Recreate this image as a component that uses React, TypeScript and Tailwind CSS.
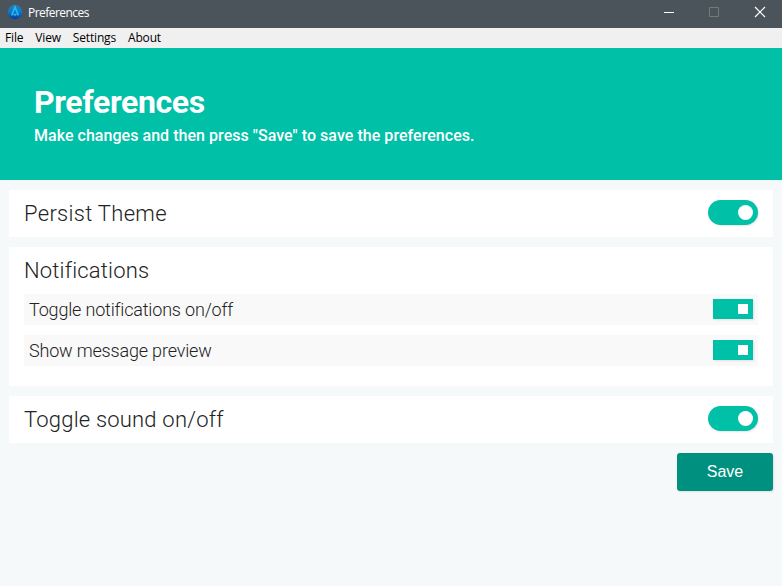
import React from 'react';

function Toggle() {
  return (
    <span className="mb-0.5 flex h-[25px] w-[50px] items-center justify-end rounded-full bg-[#00c0a7] pr-[5px] shadow-[1px_1px_2px_rgba(0,0,0,0.1)]">
      <span className="size-[15px] rounded-full bg-white" />
    </span>
  );
}

function SquareToggle() {
  return (
    <span className="mb-px flex h-5 w-10 items-center justify-end bg-[#00c0a7] pr-[5px] shadow-[1px_1px_2px_rgba(0,0,0,0.1)]">
      <span className="size-[10px] bg-white" />
    </span>
  );
}

function Row({ label }: { label: string }) {
  return (
    <div className="flex h-[31px] items-center justify-between bg-[#f9f9f9] px-[5px]">
      <span className="text-[18px] font-light leading-[31px] tracking-[-0.18px]">{label}</span>
      <SquareToggle />
    </div>
  );
}

export default function App() {
  return (
    <div className="flex h-[586px] w-[782px] flex-col overflow-hidden bg-[#f5f9fa] font-[Roboto,sans-serif] text-[#222]">
      <div className="flex h-7 shrink-0 items-center bg-[#4b545a] font-['Open_Sans',sans-serif] text-white">
        <svg className="mb-1 ml-[7px] size-4" viewBox="0 0 16 16" fill="none">
          <defs>
            <linearGradient id="appIcon" x1="8" y1="1" x2="8" y2="15" gradientUnits="userSpaceOnUse">
              <stop stopColor="#287fac" />
              <stop offset="0.5" stopColor="#087bd0" />
              <stop offset="1" stopColor="#003c9e" />
            </linearGradient>
          </defs>
          <circle cx="8" cy="8" r="7.2" fill="url(#appIcon)" />
          <path d="M4.600 11.500 8 3l3.400 8.500M6.500 10 8 11l1.500-1" stroke="#30b9ed" strokeWidth="1.5" />
        </svg>
        <span className="mb-0.5 ml-[5px] text-[12px] tracking-[-0.55px]">Preferences</span>
        <svg className="ml-auto h-7 w-[136px]" viewBox="0 0 136 28" fill="none">
          <path d="M18 12.500h10" stroke="#fff" />
          <path d="M63.500 7.500h9v9h-9z" stroke="#737a7b" />
          <path d="m109 7 10 10m0-10-10 10" stroke="#fff" strokeWidth="1.2" />
        </svg>
      </div>
      <nav className="flex h-5 shrink-0 items-center gap-3 bg-[#f0f0f0] pl-[5px] font-['Open_Sans',sans-serif] text-[12px] tracking-[-0.17px] text-black">
        <span>File</span><span>View</span><span>Settings</span><span>About</span>
      </nav>
      <header className="h-[132px] shrink-0 bg-[#00c0a7] pl-[34px] pt-[34px] text-white">
        <h1 className="text-[32px] font-bold leading-10 tracking-[-0.35px]">Preferences</h1>
        <p className="text-[16px] font-medium leading-7 tracking-[0.04px]">Make changes and then press "Save" to save the preferences.</p>
      </header>
      <main className="flex flex-col gap-[10px] px-[9px] pt-[10px]">
        <section className="flex h-[47px] items-center justify-between bg-white px-[15px]">
          <h2 className="text-[22px] font-light tracking-[0.3px]">Persist Theme</h2><Toggle />
        </section>
        <section className="h-[139px] bg-white px-[15px]">
          <h2 className="h-[47px] text-[22px] font-light leading-[47px] tracking-[0.18px]">Notifications</h2>
          <div className="flex flex-col gap-[10px]">
            <Row label="Toggle notifications on/off" /><Row label="Show message preview" />
          </div>
        </section>
        <section className="flex h-[47px] items-center justify-between bg-white px-[15px]">
          <h2 className="text-[22px] font-light tracking-[0.2px]">Toggle sound on/off</h2><Toggle />
        </section>
        <button className="h-[38px] w-24 self-end rounded-[3px] bg-[#009080] font-['Liberation_Sans',sans-serif] text-[16px] text-white shadow-[1px_1px_2px_rgba(0,0,0,0.1)]">Save</button>
      </main>
    </div>
  );
}
